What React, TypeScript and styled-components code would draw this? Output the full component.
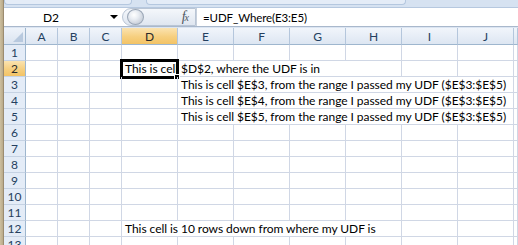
import React from 'react';
import styled, { createGlobalStyle, css } from 'styled-components';

const Global = createGlobalStyle`
  html, body { margin: 0; padding: 0; background: #fff; overflow: hidden; }
  body { width: 518px; height: 245px; font-family: Lato, "Open Sans", sans-serif; }
`;

const Window = styled.div`
  display: flex;
  width: 518px;
  height: 245px;
  overflow: hidden;
  background: #fff;
`;

const Frame = styled.div`
  flex: none;
  width: 3px;
  background: linear-gradient(90deg, #cdbf9f, #b9aa8a);
  border-right: 1px solid #9c8c70;
`;

const Main = styled.div`
  flex: 1;
  display: flex;
  flex-direction: column;
  min-width: 0;
  background: #dbe5f2;
`;

const TopStrip = styled.div`
  height: 7px;
  display: flex;
  gap: 14px;
  border-bottom: 1px solid #b6c8df;
  background: #d6e2f1;
`;

const RibbonGroup = styled.div<{ $w: number }>`
  width: ${(p) => p.$w}px;
  height: 4px;
  background: #e4ecf7;
  border: 1px solid #b4c7df;
  border-top: none;
  border-radius: 0 0 4px 4px;
`;

const FormulaBar = styled.div`
  height: 18px;
  display: flex;
  background: #fff;
  border-bottom: 1px solid #a9b8cc;
  margin-bottom: 1px;
`;

const NameBox = styled.div`
  width: 118px;
  flex: none;
  display: flex;
  align-items: center;
  font-size: 12px;
  color: #000;
`;

const NameText = styled.span`
  flex: 1;
  text-align: center;
  padding-right: 12px;
`;

const DropArrow = styled.span`
  width: 0;
  height: 0;
  margin-right: 4px;
  border-left: 4px solid transparent;
  border-right: 4px solid transparent;
  border-top: 4px solid #000;
`;

const Splitter = styled.div`
  width: 74px;
  flex: none;
  display: flex;
  align-items: center;
  justify-content: space-between;
  background: linear-gradient(#f4f7fb, #dfe6f0);
  border: 1px solid #b9c5d5;
  border-radius: 9px 0 0 9px;
  box-sizing: border-box;
  padding-right: 7px;
`;

const Knob = styled.div`
  width: 17px;
  height: 16px;
  border-radius: 50%;
  background: radial-gradient(circle at 40% 35%, #ffffff 0%, #e9edf3 35%, #b4bdca 100%);
  border: 1px solid #9aa6b6;
  box-sizing: border-box;
  margin-left: 4px;
`;

const Fx = styled.span`
  font-family: "Liberation Serif", serif;
  font-style: italic;
  font-size: 14px;
  color: #4f5660;
  letter-spacing: -1px;
`;

const FxSub = styled.span`
  font-size: 10px;
`;

const FormulaInput = styled.div`
  flex: 1;
  display: flex;
  align-items: center;
  padding-left: 6px;
  font-size: 11.5px;
  letter-spacing: -0.1px;
  color: #000;
  border-left: 1px solid #c7d0dc;
  white-space: nowrap;
`;

const Sheet = styled.div`
  flex: 1;
  display: grid;
  grid-template-columns: 22px repeat(3, 32px) repeat(7, 56px) 1fr;
  grid-template-rows: 17px;
  grid-auto-rows: 16px;
  background: #fff;
  font-size: 12px;
  letter-spacing: -0.05px;
  overflow: hidden;
`;

const headerSel = css`
  background: linear-gradient(#fbe3b0, #f6cf7f 55%, #f3c365);
  color: #2a2a2a;
`;

const Corner = styled.div`
  position: relative;
  background: linear-gradient(#eef3fa, #dbe4f0);
  border-right: 1px solid #9eb6ce;
  border-bottom: 1px solid #9eb6ce;
  box-sizing: border-box;
  &::after {
    content: '';
    position: absolute;
    right: 2px;
    bottom: 2px;
    width: 0;
    height: 0;
    border-left: 10px solid transparent;
    border-bottom: 10px solid #b8c9de;
  }
`;

const ColHead = styled.div<{ $sel?: boolean }>`
  display: flex;
  align-items: center;
  justify-content: center;
  background: linear-gradient(#f1f5fb, #dde6f2);
  border-right: 1px solid #b4c6dc;
  border-bottom: 1px solid #9eb6ce;
  box-sizing: border-box;
  color: #243f60;
  ${(p) => p.$sel && headerSel}
`;

const RowHead = styled.div<{ $sel?: boolean }>`
  display: flex;
  align-items: center;
  justify-content: center;
  background: #e4ecf7;
  border-right: 1px solid #9eb6ce;
  border-bottom: 1px solid #c5d2e3;
  box-sizing: border-box;
  color: #243f60;
  ${(p) => p.$sel && headerSel}
`;

const Cell = styled.div<{ $span?: number }>`
  position: relative;
  grid-column: span ${(p) => p.$span ?? 1};
  display: flex;
  align-items: center;
  padding-left: 3px;
  border-right: 1px solid #d0d7e5;
  border-bottom: 1px solid #d0d7e5;
  box-sizing: border-box;
  white-space: nowrap;
  color: #000;
  min-width: 0;
`;

const Selection = styled.div`
  position: absolute;
  left: -2px;
  top: -2px;
  width: 59px;
  height: 20px;
  border: 3px solid #000;
  box-sizing: border-box;
  pointer-events: none;
`;

const FillHandle = styled.div`
  position: absolute;
  right: -4px;
  bottom: -4px;
  width: 6px;
  height: 6px;
  background: #000;
  border: 1px solid #fff;
  box-sizing: border-box;
`;

const COLS = ['A', 'B', 'C', 'D', 'E', 'F', 'G', 'H', 'I', 'J', ''];

type RowDef = { start?: number; span?: number; text?: string; sel?: boolean };

const ROWS: RowDef[] = [
  {},
  { start: 3, span: 5, text: 'This is cell $D$2, where the UDF is in', sel: true },
  { start: 4, span: 6, text: 'This is cell $E$3, from the range I passed my UDF ($E$3:$E$5)' },
  { start: 4, span: 6, text: 'This is cell $E$4, from the range I passed my UDF ($E$3:$E$5)' },
  { start: 4, span: 6, text: 'This is cell $E$5, from the range I passed my UDF ($E$3:$E$5)' },
  {},
  {},
  {},
  {},
  {},
  {},
  { start: 3, span: 5, text: 'This cell is 10 rows down from where my UDF is' },
  {},
];

function renderRow(r: RowDef, idx: number) {
  const out: React.ReactNode[] = [];
  out.push(
    <RowHead key={`h${idx}`} $sel={idx === 1}>
      {idx + 1}
    </RowHead>
  );
  let c = 0;
  while (c < COLS.length) {
    if (r.text && r.start === c) {
      out.push(
        <Cell key={`c${idx}-${c}`} $span={r.span}>
          {r.sel && (
            <Selection>
              <FillHandle />
            </Selection>
          )}
          {r.text}
        </Cell>
      );
      c += r.span ?? 1;
    } else {
      out.push(<Cell key={`c${idx}-${c}`} />);
      c += 1;
    }
  }
  return out;
}

export default function App() {
  return (
    <>
      <Global />
      <Window>
        <Frame />
        <Main>
          <TopStrip>
            <RibbonGroup $w={126} />
            <RibbonGroup $w={258} />
          </TopStrip>
          <FormulaBar>
            <NameBox>
              <NameText>D2</NameText>
              <DropArrow />
            </NameBox>
            <Splitter>
              <Knob />
              <Fx>
                f<FxSub>x</FxSub>
              </Fx>
            </Splitter>
            <FormulaInput>=UDF_Where(E3:E5)</FormulaInput>
          </FormulaBar>
          <Sheet>
            <Corner />
            {COLS.map((c, i) => (
              <ColHead key={i} $sel={c === 'D'}>
                {c}
              </ColHead>
            ))}
            {ROWS.map((r, i) => renderRow(r, i))}
          </Sheet>
        </Main>
      </Window>
    </>
  );
}
